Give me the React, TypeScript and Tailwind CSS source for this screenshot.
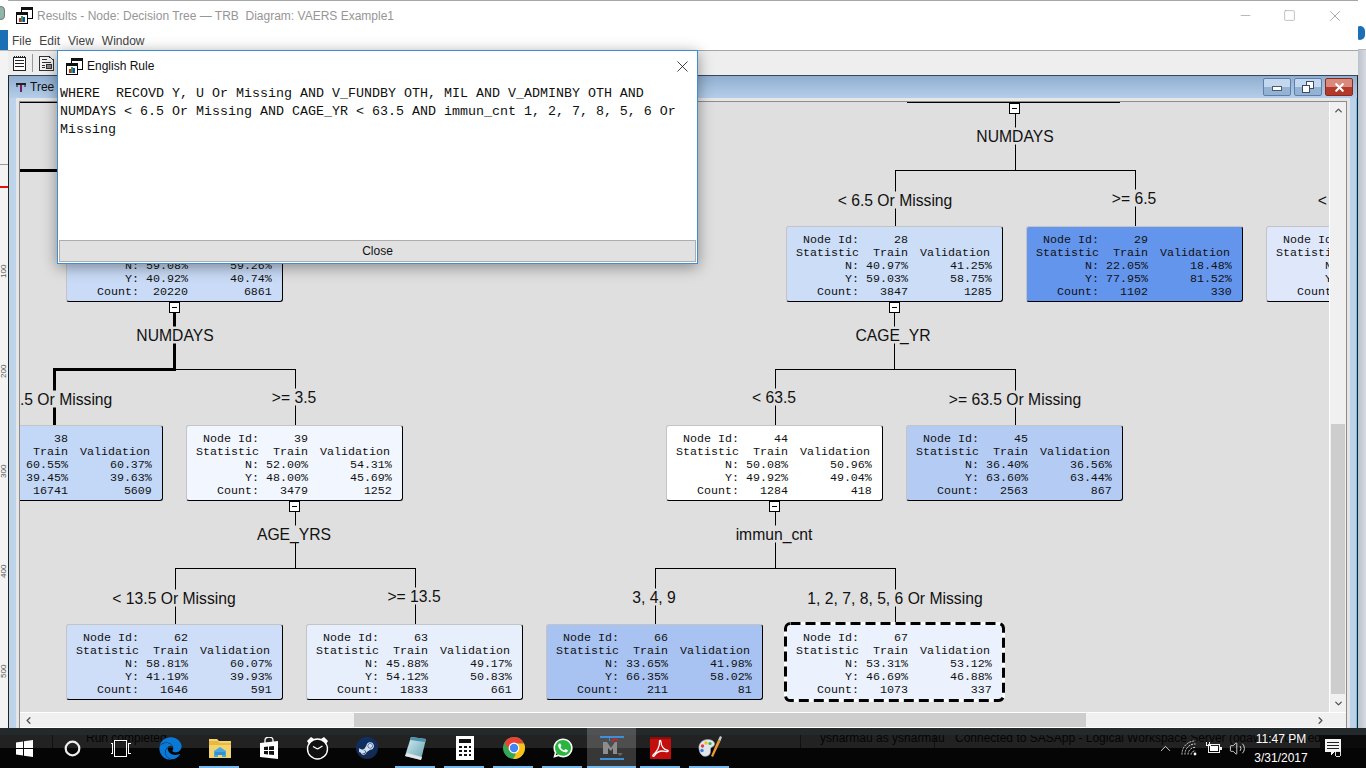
import React from "react";
import { ChevronUp, ChevronDown, ChevronLeft, ChevronRight, Volume2, X, Minus, Square } from "lucide-react";
import { FaEdge, FaSteamSymbol, FaWhatsapp } from "react-icons/fa";

const pad = (v: string, n: number) => v.padStart(n, " ");

type NodeData = {
  id: string;
  n: [string, string];
  y: [string, string];
  c: [string, string];
  cls: string;
};

const nodes: NodeData[] = [
  { id: "19", n: ["59.08%", "59.26%"], y: ["40.92%", "40.74%"], c: ["20220", "6861"], cls: "left-[46px] top-[124px] bg-[#c9dbf7]" },
  { id: "28", n: ["40.97%", "41.25%"], y: ["59.03%", "58.75%"], c: ["3847", "1285"], cls: "left-[766px] top-[124px] bg-[#cbddf7]" },
  { id: "29", n: ["22.05%", "18.48%"], y: ["77.95%", "81.52%"], c: ["1102", "330"], cls: "left-[1006px] top-[124px] bg-[#6495ed]" },
  { id: "30", n: ["47.10%", "46.82%"], y: ["52.90%", "53.18%"], c: ["1320", "442"], cls: "left-[1246px] top-[124px] bg-[#dfe8fb]" },
  { id: "38", n: ["60.55%", "60.37%"], y: ["39.45%", "39.63%"], c: ["16741", "5609"], cls: "left-[-74px] top-[323px] bg-[#c3d7f6]" },
  { id: "39", n: ["52.00%", "54.31%"], y: ["48.00%", "45.69%"], c: ["3479", "1252"], cls: "left-[166px] top-[323px] bg-[#f2f6fe]" },
  { id: "44", n: ["50.08%", "50.96%"], y: ["49.92%", "49.04%"], c: ["1284", "418"], cls: "left-[646px] top-[323px] bg-white" },
  { id: "45", n: ["36.40%", "36.56%"], y: ["63.60%", "63.44%"], c: ["2563", "867"], cls: "left-[886px] top-[323px] bg-[#b4ccf4]" },
  { id: "62", n: ["58.81%", "60.07%"], y: ["41.19%", "39.93%"], c: ["1646", "591"], cls: "left-[46px] top-[522px] bg-[#cfdef8]" },
  { id: "63", n: ["45.88%", "49.17%"], y: ["54.12%", "50.83%"], c: ["1833", "661"], cls: "left-[286px] top-[522px] bg-[#e8effc]" },
  { id: "66", n: ["33.65%", "41.98%"], y: ["66.35%", "58.02%"], c: ["211", "81"], cls: "left-[526px] top-[522px] bg-[#a8c3f2]" },
];

const monoText =
  "font-['Liberation_Mono',monospace] text-[11.67px] leading-[13px] whitespace-pre text-[#111]";

function NodeText({ d }: { d: Pick<NodeData, "id" | "n" | "y" | "c"> }) {
  return (
    <div className={monoText}>
      <div>{" Node Id:" + pad(d.id, 7)}</div>
      <div>
        {"Statistic  Train  "}
        <span className="relative left-[-2px]">Validation</span>
      </div>
      <div>{"       N: " + d.n[0] + pad(d.n[1], 12)}</div>
      <div>{"       Y: " + d.y[0] + pad(d.y[1], 12)}</div>
      <div>{"   Count:" + pad(d.c[0], 7) + pad(d.c[1], 12)}</div>
    </div>
  );
}

function TreeNode({ d }: { d: NodeData }) {
  return (
    <div
      className={`absolute w-[217px] h-[76px] rounded-[3px] border-r border-b border-r-black border-b-black border-t border-l border-t-[#c4c4c4] border-l-[#c4c4c4] pl-[9px] pt-[7px] ${d.cls}`}
    >
      <NodeText d={d} />
    </div>
  );
}

const labels: [string, string][] = [
  ["NUMDAYS", "left-[995px] top-[34px]"],
  ["< 6.5 Or Missing", "left-[875px] top-[98px]"],
  [">= 6.5", "left-[1114px] top-[96px]"],
  ["< 6.5 Or Missing", "left-[1355px] top-[98px]"],
  ["NUMDAYS", "left-[155px] top-[233px]"],
  ["< 3.5 Or Missing", "left-[35px] top-[297px]"],
  [">= 3.5", "left-[274px] top-[295px]"],
  ["CAGE_YR", "left-[873px] top-[233px]"],
  ["< 63.5", "left-[754px] top-[295px]"],
  [">= 63.5 Or Missing", "left-[995px] top-[297px]"],
  ["AGE_YRS", "left-[274px] top-[432px]"],
  ["immun_cnt", "left-[754px] top-[432px]"],
  ["< 13.5 Or Missing", "left-[154px] top-[496px]"],
  [">= 13.5", "left-[394px] top-[494px]"],
  ["3, 4, 9", "left-[634px] top-[495px]"],
  ["1, 2, 7, 8, 5, 6 Or Missing", "left-[875px] top-[496px]"],
];

const expanders = [
  "left-[989px] top-[1px]",
  "left-[869px] top-[200px]",
  "left-[149px] top-[200px]",
  "left-[749px] top-[399px]",
  "left-[269px] top-[399px]",
];

function Connectors() {
  return (
    <svg className="absolute left-0 top-0 w-[1309px] h-[610px]" viewBox="20 102 1309 610" shapeRendering="crispEdges" fill="none" stroke="#000">
      <path d="M907 102.5H1120M1015.5 113V170M895 170.5H1136M895.5 170V226M1135.5 170V226" />
      <path d="M894.5 312V369M775 369.5H1016M775.5 369V425M1015.5 369V425" />
      <path d="M775.5 511V568M655 568.5H896M655.5 568V624M895.5 568V622" />
      <path d="M295.5 511V568M175 568.5H416M175.5 568V624M415.5 568V624" />
      <path d="M176 369.5H296M295.5 369V425M20 102.5H57" />
      <path d="M174.5 312V370M53 369.5H176M54.5 369V425M20 170.5H60" strokeWidth="3" />
    </svg>
  );
}

function ResultsIcon() {
  return (
    <svg width="17" height="17" viewBox="0 0 17 17" shapeRendering="crispEdges">
      <rect x="5.5" y="0.5" width="11" height="11" fill="#fff" stroke="#000" />
      <rect x="5" y="0" width="12" height="3" fill="#111" />
      <rect x="0.5" y="5.5" width="11" height="11" fill="#fff" stroke="#000" />
      <rect x="0" y="5" width="12" height="3" fill="#111" />
      <rect x="3" y="11" width="2" height="4" fill="#e02020" />
      <rect x="5" y="9" width="2" height="6" fill="#1fa83c" />
      <rect x="7" y="10" width="2" height="5" fill="#1c3fd0" />
    </svg>
  );
}

function DocIcon() {
  return (
    <svg width="15" height="16" viewBox="0 0 15 16" fill="none" stroke="#222" shapeRendering="crispEdges">
      <path d="M1.5 2.5H13.5V15.5H1.5Z" fill="#fff" />
      <path d="M2 0.5V2M4 0.5V2M6 0.5V2M8 0.5V2M10 0.5V2M12 0.5V2M3 5.5H12M3 8.5H12M3 11.5H12" />
    </svg>
  );
}

function DocGridIcon() {
  return (
    <svg width="15" height="16" viewBox="0 0 15 16" fill="none" stroke="#333" shapeRendering="crispEdges">
      <path d="M0.5 1.5H10L14.5 5V15.5H0.5Z" fill="#f4f4f4" />
      <path d="M3 4.5H8M3 7.5H12" />
      <rect x="7.5" y="9.5" width="5" height="4" fill="#888" />
      <path d="M3 10.5H6M3 12.5H6" />
    </svg>
  );
}

function TreeIcon() {
  return (
    <svg width="12" height="11" viewBox="0 0 12 11" shapeRendering="crispEdges">
      <rect x="1" y="1" width="10" height="2" fill="#222" />
      <rect x="1" y="3" width="2" height="2" fill="#666" />
      <rect x="9" y="3" width="2" height="2" fill="#666" />
      <rect x="5" y="3" width="2" height="7" fill="#7a1a6a" />
    </svg>
  );
}

function WinLogo() {
  return (
    <svg width="17" height="17" viewBox="0 0 17 17" fill="#fff">
      <path d="M0 2.4 7 1.4V8H0ZM8 1.3 17 0V8H8ZM0 9H7V15.6L0 14.6ZM8 9H17V17L8 15.7Z" />
    </svg>
  );
}

function Cortana() {
  return (
    <svg width="17" height="17" viewBox="0 0 17 17" fill="none">
      <circle cx="8.5" cy="8.5" r="6.8" stroke="#eee" strokeWidth="2.2" />
    </svg>
  );
}

function TaskView() {
  return (
    <svg width="21" height="17" viewBox="0 0 21 17" fill="none" stroke="#fff" shapeRendering="crispEdges">
      <rect x="4.5" y="0.5" width="12" height="16" />
      <path d="M0.5 3.5H2.5V13.5H0.5M20.5 3.5H18.5V13.5H20.5" />
    </svg>
  );
}

function Explorer() {
  return (
    <svg width="22" height="20" viewBox="0 0 22 20">
      <path d="M0 1H8L10 3H22V20H0Z" fill="#f3d36f" />
      <path d="M0 3H9L11 5H22V7H0Z" fill="#e7b93f" />
      <path d="M5 19V13L11 9L17 13V19H13V15H9V19Z" fill="#4aa7e0" />
      <rect x="6" y="14" width="10" height="3" fill="#2f90d2" />
    </svg>
  );
}

function Store() {
  return (
    <svg width="20" height="22" viewBox="0 0 20 22">
      <path d="M1 6 19 4V22L1 20Z" fill="#fff" />
      <path d="M6 6V3A4 3 0 0 1 14 3V5" fill="none" stroke="#fff" strokeWidth="1.3" />
      <path d="M5 10 9 9.6V13H5ZM10 9.5 15 9V13H10ZM5 14H9V17.5L5 17ZM10 14H15V18L10 17.6Z" fill="#111" />
    </svg>
  );
}

function Alarm() {
  return (
    <svg width="23" height="24" viewBox="0 0 23 24" fill="none">
      <path d="M1 5 5 1 8 3 3 8ZM22 5 18 1 15 3 20 8Z" fill="#fff" />
      <circle cx="11.5" cy="13" r="10" fill="#111" stroke="#fff" strokeWidth="1.4" />
      <path d="M11.5 13 7 10.5M11.5 13 16.5 10" stroke="#fff" strokeWidth="1.4" />
    </svg>
  );
}

function Steam() {
  return (
    <div className="w-[22px] h-[22px] rounded-full bg-[linear-gradient(#0e2f66,#15294f)] flex items-center justify-center text-[#cfe0f0]">
      <FaSteamSymbol size={17} />
    </div>
  );
}

function Notepad() {
  return (
    <svg width="23" height="24" viewBox="0 0 23 24">
      <defs>
        <linearGradient id="np" x1="0" y1="0" x2="1" y2="1">
          <stop offset="0" stopColor="#d9f1f3" />
          <stop offset="1" stopColor="#5f9fb0" />
        </linearGradient>
      </defs>
      <path d="M7 1 22 3 17 24 1 20Z" fill="url(#np)" />
      <path d="M7 1 22 3 21 6 6 4Z" fill="#4d93ad" />
      <path d="M1 20 17 24 18 21 3 17Z" fill="#e6e6e6" />
    </svg>
  );
}

function Calc() {
  return (
    <svg width="18" height="24" viewBox="0 0 18 24" shapeRendering="crispEdges">
      <rect width="18" height="24" fill="#fff" />
      <rect x="3" y="3" width="12" height="4" fill="#111" />
      <path d="M3 10h3v2H3zM8 10h3v2H8zM13 10h2v2h-2zM3 14h3v2H3zM8 14h3v2H8zM13 14h2v2h-2zM3 18h3v2H3zM8 18h3v2H8zM13 18h2v2h-2z" fill="#111" />
    </svg>
  );
}

function Chrome() {
  return (
    <svg width="22" height="22" viewBox="0 0 22 22">
      <circle cx="11" cy="11" r="11" fill="#34a853" />
      <path d="M1.5 5.5A11 11 0 0 1 21 6.5L11 6.5L6.5 13.5Z" fill="#ea4335" />
      <path d="M21 6.5A11 11 0 0 1 10 22L15.5 13Z M11 6.5H21L13 22Z" fill="#fbc116" />
      <circle cx="11" cy="11" r="5.4" fill="#fff" />
      <circle cx="11" cy="11" r="4.2" fill="#4285f4" />
    </svg>
  );
}

function Whatsapp() {
  return (
    <div className="relative w-[22px] h-[22px] flex items-center justify-center text-white">
      <div className="absolute left-[2px] top-[2px] w-[18px] h-[18px] rounded-full bg-[#2ab540]" />
      <FaWhatsapp size={22} className="relative" />
    </div>
  );
}

function Miner() {
  return (
    <svg width="24" height="26" viewBox="0 0 24 26" shapeRendering="crispEdges">
      <rect x="0" y="1" width="24" height="2" fill="#3f8ed8" />
      <rect x="0" y="23" width="24" height="2" fill="#3f8ed8" />
      <rect x="9" y="3" width="1" height="3" fill="#3f8ed8" />
      <path d="M3 19V7H7L11 13L15 7H17V19H13V13L11 16L8 13V19Z" fill="#8d8d8d" shapeRendering="auto" />
      <path d="M12 7C13 3 17 3 18 6" fill="none" stroke="#d22424" strokeWidth="1.4" shapeRendering="auto" />
      <path d="M17 18H23L20 21Z" fill="#666" shapeRendering="auto" />
    </svg>
  );
}

function Acrobat() {
  return (
    <svg width="21" height="22" viewBox="0 0 21 22">
      <rect width="21" height="22" fill="#c40d0d" />
      <rect width="21" height="2" fill="#8c0b0b" />
      <path d="M3 18C7 15 10 9 9.5 4.5C9.5 3 11 3 11 5C11 9 14 13 18 13.5C19 14 17.5 15 15 14.3C11 13.5 7 15 5 18C4 20 2 19.5 3 18Z" fill="none" stroke="#fff" strokeWidth="1.3" />
    </svg>
  );
}

function Palette() {
  return (
    <svg width="25" height="24" viewBox="0 0 25 24">
      <path d="M2 13C1 6 8 2 14 4C19 6 18 10 15 11C12 12 15 16 12 19C8 22 3 20 2 13Z" fill="#dfe5ea" stroke="#a8b0b8" strokeWidth="0.6" />
      <circle cx="5.5" cy="10" r="1.7" fill="#e83c3c" />
      <circle cx="9" cy="7" r="1.7" fill="#f0c020" />
      <circle cx="13" cy="7.5" r="1.6" fill="#36b24a" />
      <circle cx="5" cy="14.5" r="1.7" fill="#3a7de0" />
      <path d="M14 20 21 4 23.5 5 16 21Z" fill="#e89a2c" />
      <path d="M21 4 23 0 25 1 23.5 5Z" fill="#c9c9c9" />
    </svg>
  );
}

function Wifi() {
  return (
    <svg width="16" height="16" viewBox="0 0 16 16" fill="none" stroke="#ddd" strokeWidth="1">
      <path d="M1 14.5A13 13 0 0 1 14.5 1M4 14.5A10 10 0 0 1 14.5 4M7 14.5A7 7 0 0 1 14.5 7.5M10 14.5A4 4 0 0 1 14.5 11" strokeDasharray="2 1" />
      <circle cx="14" cy="14" r="1.4" fill="#fff" stroke="none" />
    </svg>
  );
}

function Battery() {
  return (
    <svg width="17" height="15" viewBox="0 0 17 15" fill="none" stroke="#eee" shapeRendering="crispEdges">
      <rect x="3.5" y="3.5" width="11" height="8" />
      <rect x="5" y="5" width="8" height="5" fill="#fff" stroke="none" />
      <rect x="15" y="6" width="2" height="3" fill="#eee" stroke="none" />
      <path d="M1.5 0.5V4M4.5 0.5V3M0.5 4.5H5.5" />
    </svg>
  );
}

function NotifyIcon() {
  return (
    <svg width="19" height="19" viewBox="0 0 19 19" shapeRendering="crispEdges">
      <path d="M1 0H17V13H10L7 16V13H1Z" fill="#f4f4f4" />
      <path d="M3 3H15V4H3ZM3 6H15V7H3ZM3 9H15V10H3Z" fill="#222" />
      <circle cx="14" cy="15" r="2.6" fill="none" stroke="#ddd" />
    </svg>
  );
}

const tasks: { icon: React.ReactNode; on?: boolean; hi?: boolean }[] = [
  { icon: <FaEdge size={23} color="#0a78d7" /> },
  { icon: <Explorer />, on: true },
  { icon: <Store /> },
  { icon: <Alarm /> },
  { icon: <Steam /> },
  { icon: <Notepad />, on: true },
  { icon: <Calc />, on: true },
  { icon: <Chrome />, on: true },
  { icon: <Whatsapp />, on: true },
  { icon: <Miner />, hi: true },
  { icon: <Acrobat />, on: true },
  { icon: <Palette />, on: true },
];

export default function App() {
  return (
    <div className="w-[1366px] h-[768px] overflow-hidden relative flex flex-col bg-black font-['Liberation_Sans',sans-serif]">
      <div className="flex h-[728px]">
        {/* window behind, left edge */}
        <div className="w-[8px] flex flex-col bg-[#f3f3f3] relative overflow-hidden">
          <div className="h-[30px] bg-white flex items-center">
            <div className="w-[8px] h-[14px] mt-[-4px] ml-[-3px] rounded-full bg-[#8fb7a8] border border-[#777]" />
          </div>
          <div className="h-[20px] bg-[#1a6fb5]" />
          <div className="flex-1 relative border-t border-[#bbb]">
            <div className="absolute left-0 top-[135px] w-[8px] h-[2px] bg-[#e01010]" />
            <div className="absolute left-0 top-[113px] w-[8px] h-px bg-[#999]" />
            {["top-[207px]", "top-[307px]", "top-[407px]", "top-[507px]", "top-[607px]"].map((t, i) => (
              <div key={t} className={`absolute left-0 ${t} w-[8px] h-[20px] text-[8px] leading-[8px] text-[#555] [writing-mode:vertical-rl] rotate-180`}>
                {(i + 1) * 100}
              </div>
            ))}
          </div>
        </div>

        {/* Results window */}
        <div className="w-[1350px] flex flex-col border-t border-[#a6a6a6] bg-white">
          <div className="h-[29px] flex items-center pl-[8px] shrink-0">
            <ResultsIcon />
            <span className="ml-[4px] text-[12px] text-[#969696] whitespace-pre">
              Results - Node: Decision Tree — TRB  Diagram: VAERS Example1
            </span>
            <div className="ml-auto flex items-center text-[#8f8f8f]">
              <Minus size={15} strokeWidth={1} className="mr-[30px]" />
              <Square size={13} strokeWidth={1} className="mr-[30px]" />
              <X size={18} strokeWidth={1} className="mr-[14px]" />
            </div>
          </div>
          <div className="h-[21px] flex items-center gap-[8px] pl-[4px] pt-[2px] text-[12px] text-[#444] border-b border-[#a6a6a6] shrink-0">
            <span>File</span>
            <span>Edit</span>
            <span>View</span>
            <span>Window</span>
          </div>
          <div className="h-[24px] bg-[#eeeeee] flex items-center pl-[4px] shrink-0">
            <DocIcon />
            <div className="w-px h-[18px] bg-[#999] ml-[5px] mr-[6px]" />
            <DocGridIcon />
          </div>

          {/* MDI child */}
          <div className="flex-1 min-h-0 flex flex-col border-l border-l-[#222] border-r border-r-[#222] border-t border-t-[#39485a] bg-[#e6e6e6]">
            <div className="h-[22px] shrink-0 bg-[linear-gradient(#90aed0,#b4cee9)] flex items-center pl-[6px] pr-[4px]">
              <TreeIcon />
              <span className="ml-[3px] text-[12px] text-[#111]">Tree</span>
              <div className="ml-auto flex gap-[3px]">
                <div className="w-[28px] h-[18px] rounded-[2px] border border-[#5d7fa8] bg-[linear-gradient(#c3d8ef_50%,#93b2d4_50%)] flex items-center justify-center">
                  <div className="w-[10px] h-[5px] mt-[3px] bg-white border border-[#4a5b70]" />
                </div>
                <div className="w-[28px] h-[18px] rounded-[2px] border border-[#5d7fa8] bg-[linear-gradient(#c3d8ef_50%,#93b2d4_50%)] flex items-center justify-center">
                  <svg width="12" height="12" viewBox="0 0 12 12" fill="#fff" stroke="#3c4c60" shapeRendering="crispEdges">
                    <rect x="4.5" y="0.5" width="7" height="7" />
                    <rect x="0.5" y="4.5" width="7" height="7" />
                  </svg>
                </div>
                <div className="w-[28px] h-[18px] rounded-[2px] border border-[#8a2a20] bg-[linear-gradient(#d98a7c_50%,#b33a2a_50%)] flex items-center justify-center">
                  <X size={13} strokeWidth={4} className="text-white" />
                </div>
              </div>
            </div>
            <div className="flex-1 min-h-0 flex">
              <div className="w-[7px] bg-[#bcd3ea] shrink-0" />
              <div className="w-[1334px] flex flex-col pt-[3px] px-[3px] shrink-0">
                <div className="flex-1 min-h-0 flex flex-col border border-[#8c8c8c] border-b-0 bg-white">
                  <div className="h-[610px] flex">
                    {/* tree canvas */}
                    <div className="w-[1309px] h-[610px] relative overflow-hidden bg-[#dfdfdf]">
                      <Connectors />
                      {labels.map(([t, c], i) => (
                        <div
                          key={i}
                          className={`absolute ${c} -translate-x-1/2 -translate-y-1/2 bg-[#dfdfdf] text-[15.7px] leading-[17px] text-[#111] whitespace-nowrap`}
                        >
                          {t}
                        </div>
                      ))}
                      {nodes.map((d) => (
                        <TreeNode key={d.id} d={d} />
                      ))}
                      <div className="absolute left-[764px] top-[520px] w-[221px] h-[80px] rounded-[6px] bg-[#ebf1fd] pl-[12px] pt-[10px]">
                        <svg className="absolute left-0 top-0" width="221" height="80" viewBox="0 0 221 80" fill="none" strokeWidth="3">
                          <rect x="1.5" y="1.5" width="218" height="77" rx="5" stroke="#fff" />
                          <rect x="1.5" y="1.5" width="218" height="77" rx="5" stroke="#000" strokeDasharray="10 5" />
                        </svg>
                        <div className="relative">
                          <NodeText d={{ id: "67", n: ["53.31%", "53.12%"], y: ["46.69%", "46.88%"], c: ["1073", "337"] }} />
                        </div>
                      </div>
                      {expanders.map((c) => (
                        <div key={c} className={`absolute ${c} w-[11px] h-[11px] bg-white border border-black flex items-center justify-center`}>
                          <div className="w-[5px] h-px bg-black" />
                        </div>
                      ))}
                    </div>
                    {/* vertical scrollbar */}
                    <div className="w-[17px] bg-[#f0f0f0] border-l border-white relative">
                      <div className="h-[17px] flex items-center justify-center text-[#555]">
                        <ChevronUp size={11} strokeWidth={3} />
                      </div>
                      <div className="mt-[305px] mx-px h-[270px] bg-[#cdcdcd]" />
                      <div className="h-[17px] mt-px flex items-center justify-center text-[#555]">
                        <ChevronDown size={11} strokeWidth={3} />
                      </div>
                    </div>
                  </div>
                  {/* horizontal scrollbar */}
                  <div className="h-[15px] bg-[#f0f0f0] border-t border-white flex items-center relative">
                    <ChevronLeft size={11} strokeWidth={3} className="text-[#555] ml-[3px]" />
                    <div className="ml-[320px] w-[732px] h-[14px] bg-[#cdcdcd]" />
                    <ChevronRight size={11} strokeWidth={3} className="text-[#555] ml-[229px]" />
                  </div>
                </div>
              </div>
              <div className="flex-1 bg-[#bcd3ea] border-r border-[#63c3f0]" />
            </div>
          </div>
        </div>

        {/* window behind, right edge */}
        <div className="w-[8px] flex flex-col bg-white relative overflow-hidden">
          <div className="h-[50px] border-b border-[#bbb] pt-[26px]">
            <div className="w-[10px] h-[14px] ml-[-3px] rounded-full bg-[#1a6fb5]" />
          </div>
          <div className="flex-1 bg-[linear-gradient(90deg,#b9c2cd,#d7dbe0)]" />
        </div>
      </div>

      {/* Dialog */}
      <div className="absolute left-[57px] top-[50px] w-[641px] h-[214px] bg-white border border-[#3d8ed2] shadow-[0_3px_14px_rgba(0,0,0,0.4)] flex flex-col">
        <div className="h-[30px] shrink-0 flex items-center pl-[8px] pr-[5px]">
          <ResultsIcon />
          <span className="ml-[4px] text-[12px] text-[#111]">English Rule</span>
          <X size={19} strokeWidth={1} className="ml-auto text-[#111]" />
        </div>
        <div className="flex-1 pl-[2px] pt-[4px] font-['Liberation_Mono',monospace] text-[13.33px] leading-[18px] text-[#111] whitespace-pre">
          {"WHERE  RECOVD Y, U Or Missing AND V_FUNDBY OTH, MIL AND V_ADMINBY OTH AND\nNUMDAYS < 6.5 Or Missing AND CAGE_YR < 63.5 AND immun_cnt 1, 2, 7, 8, 5, 6 Or\nMissing"}
        </div>
        <div className="h-[22px] mx-[1px] mb-[1px] bg-[#e1e1e1] border border-[#adadad] flex items-center justify-center text-[12px] text-[#111]">
          Close
        </div>
      </div>

      {/* Taskbar */}
      <div className="h-[40px] relative flex bg-[linear-gradient(#24292b_0_7px,#0b0b0b_7px_20px,#050505_20px)]">
        <div className="absolute left-0 top-[7px] w-[1320px] h-[13px] bg-[#222] overflow-hidden text-[12px] leading-[13px] text-[#050505] whitespace-pre">
          <div className="absolute left-[52px] top-0 w-px h-[13px] bg-[#111]" />
          <div className="absolute left-[800px] top-0 w-px h-[13px] bg-[#111]" />
          <div className="absolute left-[934px] top-0 w-px h-[13px] bg-[#111]" />
          <span className="absolute left-[86px] top-[-3px]">Run completed</span>
          <span className="absolute left-[820px] top-[-3px]">ysharmau as ysharmau</span>
          <span className="absolute left-[955px] top-[-3px]">Connected to SASApp - Logical Workspace Server (odawsu1.odu.edu)</span>
        </div>
        <div className="relative w-[48px] flex items-center justify-center">
          <WinLogo />
        </div>
        <div className="relative w-[48px] flex items-center justify-center">
          <Cortana />
        </div>
        <div className="relative w-[48px] flex items-center justify-center">
          <TaskView />
        </div>
        <div className="relative flex ml-[2px]">
          {tasks.map((t, i) => (
            <div key={i} className={`relative w-[49px] flex items-center justify-center ${t.hi ? "bg-white/20" : ""}`}>
              {t.icon}
              {t.on && <div className="absolute bottom-0 left-[4px] right-[5px] h-[2px] bg-[#76b9ed]" />}
              {t.hi && <div className="absolute bottom-0 left-0 right-0 h-[2px] bg-[#76b9ed]" />}
            </div>
          ))}
        </div>
        <div className="relative ml-auto flex items-center mr-[13px]">
          <div className="w-[24px] flex justify-center text-[#eee]">
            <ChevronUp size={17} strokeWidth={1.2} />
          </div>
          <div className="w-[24px] flex justify-center">
            <Wifi />
          </div>
          <div className="w-[24px] flex justify-center">
            <Battery />
          </div>
          <div className="w-[24px] flex justify-center text-[#eee]">
            <Volume2 size={17} strokeWidth={1.2} />
          </div>
          <div className="w-[64px] pt-[1px] flex flex-col items-center text-[12px] leading-[19px] text-white">
            <span>11:47 PM</span>
            <span>3/31/2017</span>
          </div>
          <div className="w-[40px] flex justify-center">
            <NotifyIcon />
          </div>
        </div>
      </div>
    </div>
  );
}
